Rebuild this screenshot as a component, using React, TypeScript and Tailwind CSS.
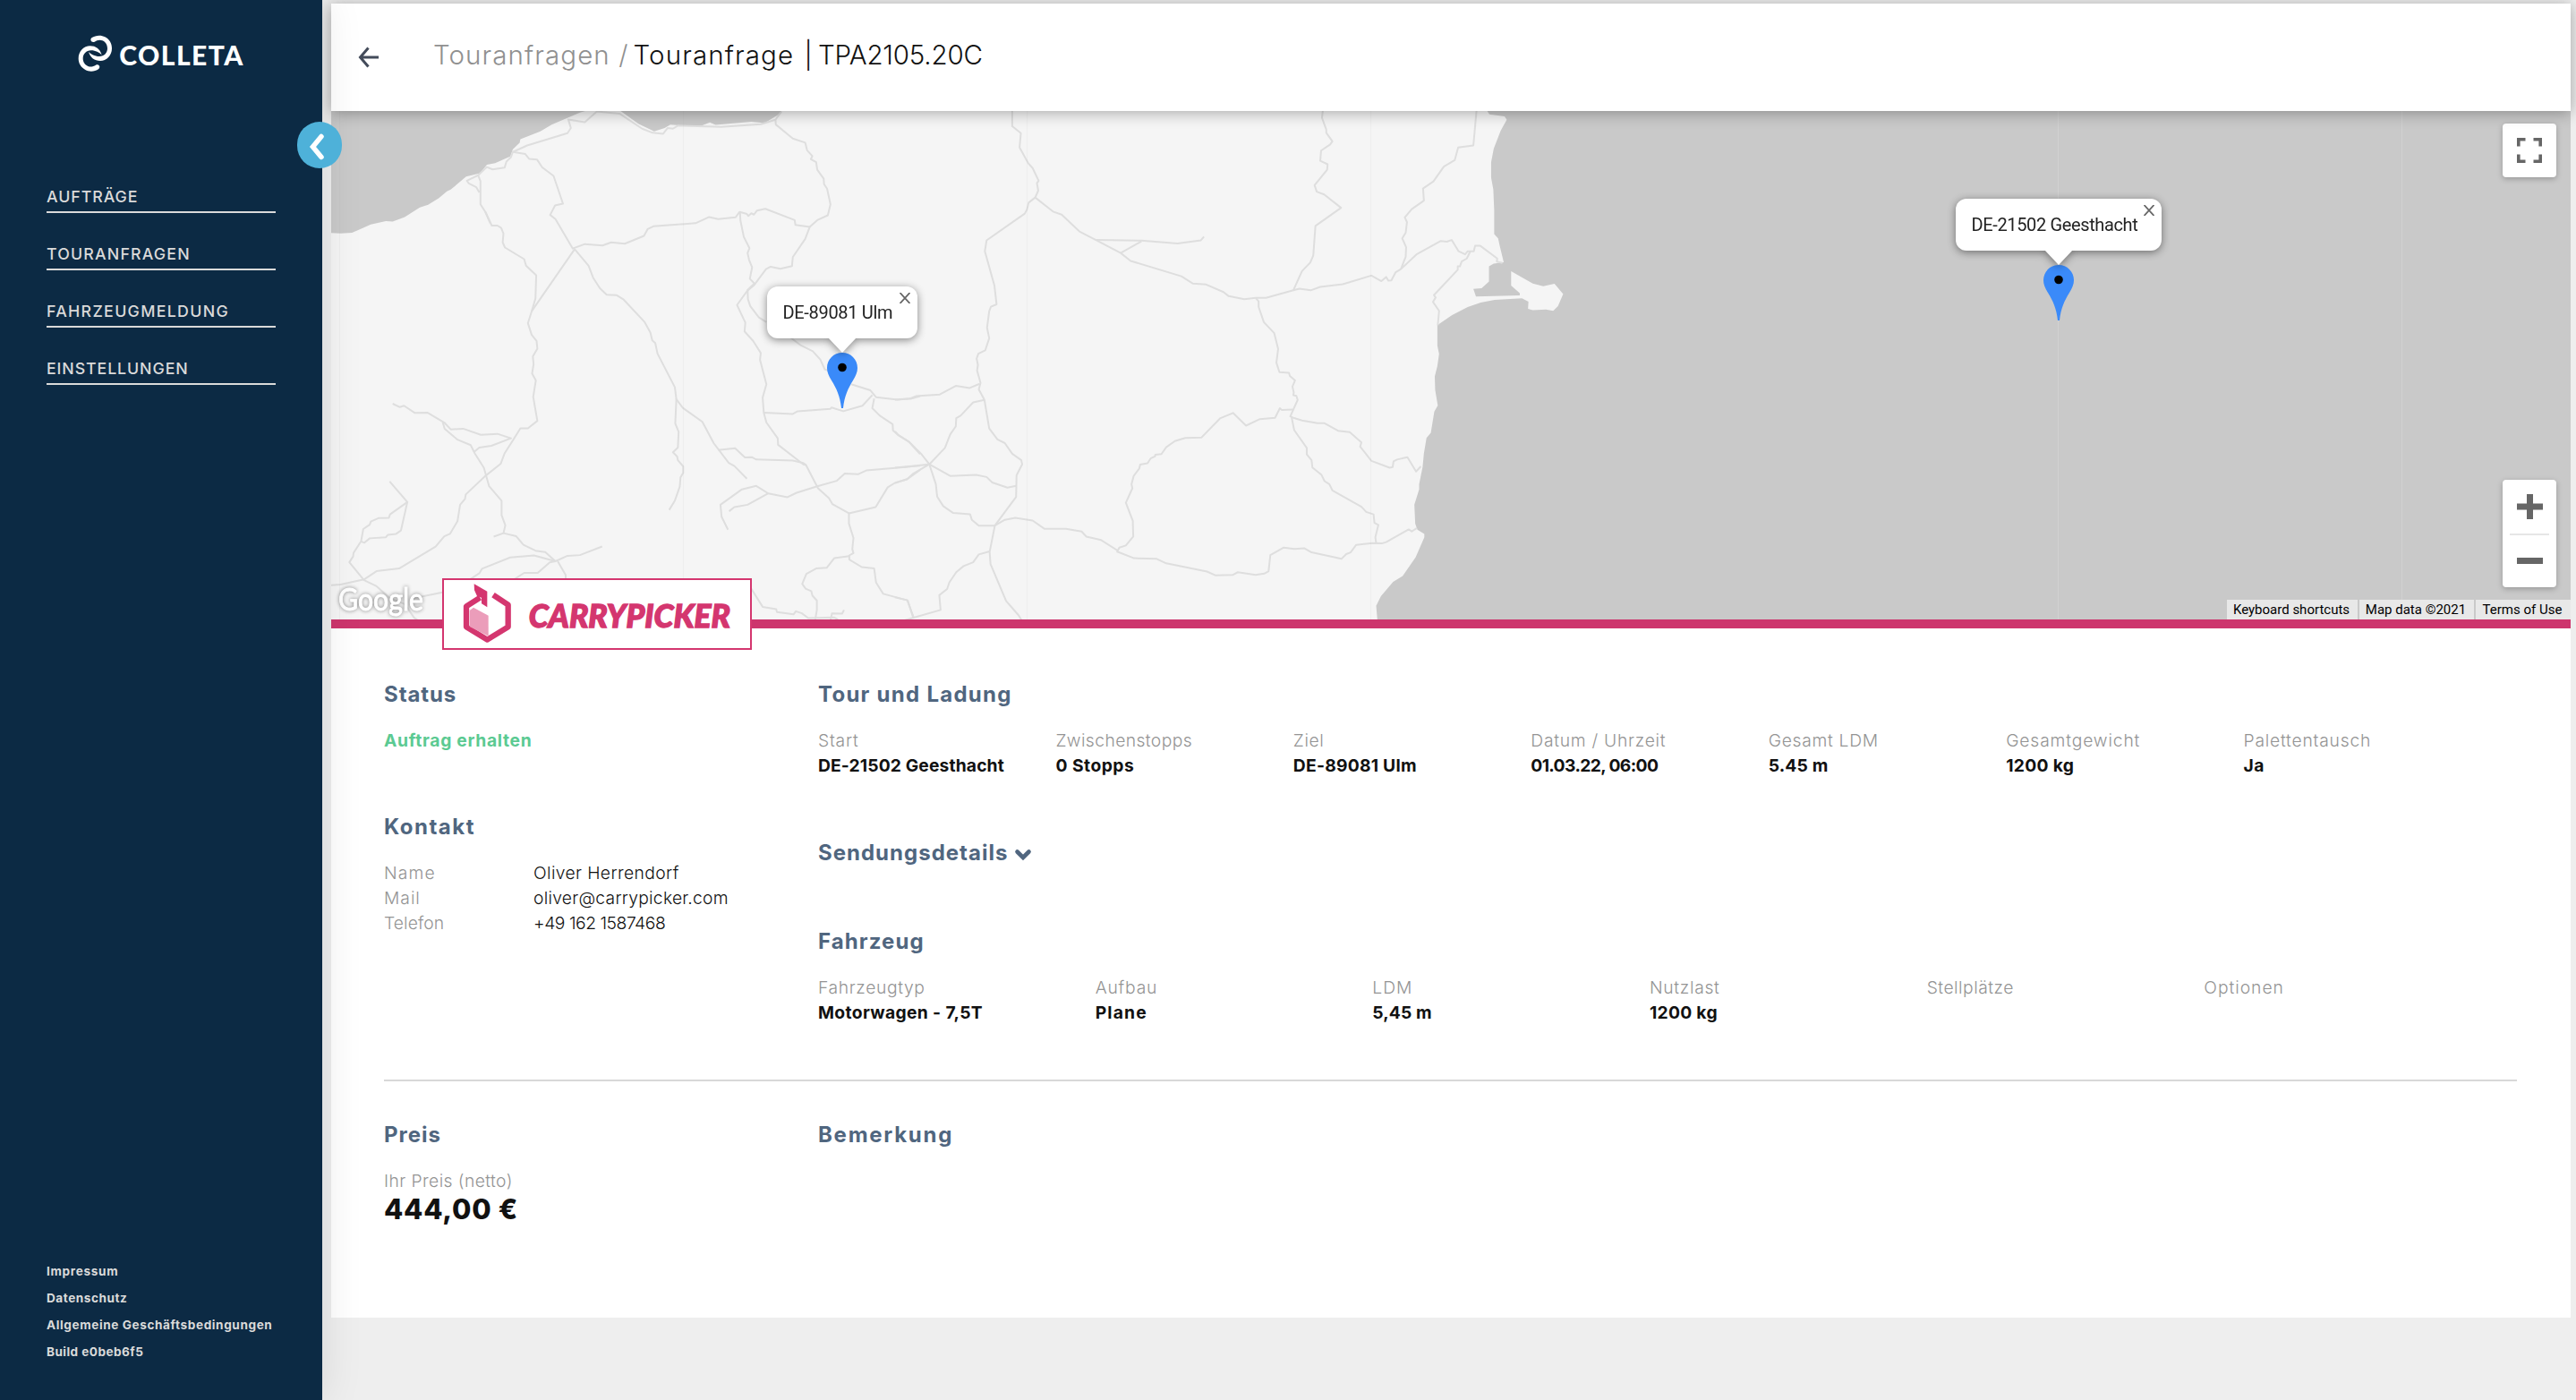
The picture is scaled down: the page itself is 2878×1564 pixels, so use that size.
import type { ReactNode } from "react";

const navItems = [
  { label: "AUFTRÄGE", tracking: "tracking-[0.052em]" },
  { label: "TOURANFRAGEN", tracking: "tracking-[0.065em]" },
  { label: "FAHRZEUGMELDUNG", tracking: "tracking-[0.073em]" },
  { label: "EINSTELLUNGEN", tracking: "tracking-[0.05em]" },
];

const footerItems = [
  { label: "Impressum", tracking: "tracking-[0.05em]" },
  { label: "Datenschutz", tracking: "tracking-[0.04em]" },
  { label: "Allgemeine Geschäftsbedingungen", tracking: "tracking-[0.044em]" },
  { label: "Build e0beb6f5", tracking: "tracking-[0.033em]" },
];

type FieldData = { label: string; value?: string; lt: string; vt?: string };

const tourFields: FieldData[] = [
  { label: "Start", value: "DE-21502 Geesthacht", lt: "tracking-[0.04em]", vt: "tracking-[0.006em]" },
  { label: "Zwischenstopps", value: "0 Stopps", lt: "tracking-[0.021em]", vt: "tracking-[0.025em]" },
  { label: "Ziel", value: "DE-89081 Ulm", lt: "tracking-[0.03em]", vt: "tracking-[0.012em]" },
  { label: "Datum / Uhrzeit", value: "01.03.22, 06:00", lt: "tracking-[0.038em]", vt: "tracking-[-0.032em]" },
  { label: "Gesamt LDM", value: "5.45 m", lt: "tracking-[0.036em]", vt: "tracking-[0.008em]" },
  { label: "Gesamtgewicht", value: "1200 kg", lt: "tracking-[0.044em]", vt: "tracking-[0.016em]" },
  { label: "Palettentausch", value: "Ja", lt: "tracking-[0.04em]", vt: "tracking-[0.02em]" },
];

const vehicleFields: FieldData[] = [
  { label: "Fahrzeugtyp", value: "Motorwagen - 7,5T", lt: "tracking-[0.033em]", vt: "tracking-[0.018em]" },
  { label: "Aufbau", value: "Plane", lt: "tracking-[0.042em]", vt: "tracking-[0.06em]" },
  { label: "LDM", value: "5,45 m", lt: "tracking-[0.05em]", vt: "tracking-[0.004em]" },
  { label: "Nutzlast", value: "1200 kg", lt: "tracking-[0.036em]", vt: "tracking-[0.014em]" },
  { label: "Stellplätze", lt: "tracking-[0.026em]" },
  { label: "Optionen", lt: "tracking-[0.05em]" },
];

function Heading({ children, tracking }: { children: ReactNode; tracking: string }) {
  return (
    <h2 className={`mb-6 h-7 text-[24px] leading-[29px] font-bold whitespace-nowrap text-[#50667f] ${tracking}`}>
      {children}
    </h2>
  );
}

function Field({ label, value, lt, vt }: FieldData) {
  return (
    <div className="h-14 text-[19.3px] leading-7 whitespace-nowrap">
      <div className={`font-light text-[#949494] ${lt}`}>{label}</div>
      {value && <div className={`font-bold text-[#111111] ${vt}`}>{value}</div>}
    </div>
  );
}

function ColletaLogo() {
  const link =
    "M98 67C112 57 131 57 143 64C158 72 166 86 166 102C166 126 148 144 127 144C108 144 94 134 88 114C97 122 108 129 124 129C140 129 151 117 151 102C151 90 144 80 134 76C124 72 115 76 108 80C98 84 91 74 98 67Z";
  return (
    <svg className="h-[42px] w-[186px]" viewBox="52 57 558 126" fill="#fff">
      <path d={link} />
      <path d={link} transform="rotate(180 110 119)" />
      <text
        x="191"
        y="159"
        fontFamily="Lato, sans-serif"
        fontWeight="900"
        fontSize="90"
        textLength="414"
        lengthAdjust="spacing"
      >
        COLLETA
      </text>
    </svg>
  );
}

function Sidebar() {
  return (
    <aside className="relative z-20 flex h-full w-[360px] shrink-0 flex-col bg-[#0c2a44] text-[#dadada] shadow-[0_0_44px_rgba(0,0,0,0.10)]">
      <div className="ml-[87px] mt-[39px] h-[42px]">
        <ColletaLogo />
      </div>
      <button className="absolute top-[136px] left-[332px] flex h-[52px] w-[50px] items-center justify-center rounded-[25px] bg-[#4eb1d9]">
        <svg className="mt-1 mr-[7px] h-8 w-5" viewBox="0 0 20 32" fill="none" stroke="#fff" strokeWidth="5.5" strokeLinecap="round">
          <path d="M15 4.500L5.500 16L15 27.500" />
        </svg>
      </button>
      <nav className="mt-[125px] ml-[52px] flex w-64 flex-col gap-8">
        {navItems.map((n) => (
          <a
            key={n.label}
            className={`border-b-2 border-[#dadada] pb-0.5 text-[17.8px] leading-7 font-medium ${n.tracking}`}
          >
            {n.label}
          </a>
        ))}
      </nav>
      <div className="mt-auto mb-[39px] ml-[52px] flex flex-col text-[13.6px] leading-[30px] font-bold whitespace-nowrap">
        {footerItems.map((f) => (
          <a key={f.label} className={f.tracking}>
            {f.label}
          </a>
        ))}
      </div>
    </aside>
  );
}

function Header() {
  return (
    <header className="relative z-10 flex h-[120px] items-center bg-white shadow-[0_2px_16px_rgba(0,0,0,0.32)]">
      <svg className="ml-[30px] h-6 w-6" viewBox="0 0 24 24" fill="none" stroke="#434b5a" strokeWidth="3">
        <path d="M23 12H3M11.500 1.500L2.500 12L11.500 22.500" />
      </svg>
      <h1 className="-mt-1.5 ml-[60px] flex text-[29.5px] leading-9 whitespace-pre">
        <span className="w-[223.500px] font-light tracking-[0.037em] text-[#909090]">Touranfragen /</span>
        <span className="w-[191px] font-[350] tracking-[0.038em] text-[#111]">Touranfrage</span>
        <span className="w-[15.500px] font-light text-[#111]">|</span>
        <span className="font-[350] tracking-[-0.006em] text-[#111]">TPA2105.20C</span>
      </h1>
    </header>
  );
}

/* Road and coast geometry, one coordinate grid per half of the mainland. */
const westRoads = [
  "M0 1395L30 1393L92 1378L125 1354L185 1346L282 1282L305 1252L320 1245L340 1208L347 1160L360 1143L362 1130L415 1075L455 1040L465 1010L490 967L507 937L527 937L552 915L541 845L548 797L538 777L542 750L540 727L552 704L550 682L537 664L527 630L537 595L651 414",
  "M537 595L547 558L549 490L522 462L517 443L466 409L460 394L462 368L456 352L446 345L431 345L414 305L401 283L401 215L395 198L365 214L370 222L390 233L398 248",
  "M414 305L427 338",
  "M395 198L418 174L433 181L465 176L470 158L482 145L487 130L520 136L530 150L551 152L565 175L595 200L620 281L599 286L586 314L600 326L646 412L678 399L725 403L748 394L784 398L835 375L845 355L860 347L972 338L1008 320L1032 326L1078 321L1089 305L1108 311L1112 317L1120 309L1127 313L1135 301L1157 296L1235 329L1237 343L1275 349",
  "M487 130L525 111L632 75L641 60L634 35L678 43L710 12L770 18L830 62L858 74L886 77L898 60L912 62L925 53L1040 57L1145 49L1184 36L1200 12",
  "M1184 36L1185 50L1230 91L1263 103L1268 125L1282 142L1278 151L1292 160L1295 182L1312 208L1313 224L1321 237L1330 283L1323 315L1295 329L1275 349L1263 384L1230 437L1228 463L1197 471L1171 465L1159 472L1128 518L1108 537L1082 577L1104 628L1102 654L1125 682L1145 717L1143 737L1160 808L1150 847L1153 891L1160 920L1190 966L1191 985L1258 1042L1265 1044L1297 1112L1326 1141L1335 1158L1379 1185L1379 1215L1391 1257L1388 1290L1391 1301L1380 1308L1380 1320L1413 1342L1446 1346L1451 1387L1470 1420L1534 1439L1551 1490",
  "M1090 308L1091 330L1100 378L1115 411L1110 425L1114 445L1122 467L1116 500L1128 514L1110 533L1111 560L1117 580L1140 613L1160 627",
  "M1225 673L1252 695L1283 712L1303 736L1315 765L1330 770",
  "M1385 808L1436 826L1451 846L1508 853L1545 850L1568 843",
  "M1153 891L1230 895L1243 887L1330 880L1333 876L1364 887L1415 871L1441 840",
  "M1446 850L1441 878L1461 900L1495 925L1496 943L1510 957L1537 975L1568 1012",
  "M651 414L688 462L700 497L718 528L736 547L762 548L780 560L837 627L852 657L857 680L865 688L871 719L917 817L921 852L938 877L990 918L1020 980L1060 1038L1075 1047L1108 1084",
  "M921 850L918 923L927 947L925 993L912 1007L923 1019L925 1030L939 1048L939 1067L932 1080L930 1107L917 1148L902 1175",
  "M1032 1000L1077 995L1103 1022L1121 1021L1133 1028L1230 1031L1258 1038L1265 1044",
  "M1568 1046L1425 1060L1403 1071L1368 1069L1347 1090L1295 1106L1240 1125L1216 1138L1165 1127L1133 1105L1095 1115L1038 1160L1041 1195L1058 1233",
  "M1061 1179L1075 1167L1110 1160L1165 1127",
  "M1379 1185L1450 1167L1482 1109L1500 1097L1534 1085L1568 1058",
  "M1380 1310L1340 1316L1320 1344L1292 1346L1266 1362L1255 1391L1264 1405L1279 1412L1282 1425L1294 1440L1294 1467L1289 1498",
  "M1117 1400L1150 1458L1186 1465L1188 1473L1232 1480L1238 1471L1254 1477L1271 1491L1340 1489L1350 1495",
  "M1330 1498L1334 1477L1361 1478L1366 1467",
  "M168 865L187 875L198 871L227 892L260 891L305 920L322 940L355 938L402 956L446 953L482 966L430 988L398 993L383 1007",
  "M301 920L306 938L340 970L375 986L386 1010L410 1052L424 1106L457 1148L457 1190L467 1220L462 1243L436 1253",
  "M462 1243L496 1252L515 1277L547 1294L573 1298L600 1325L632 1309L665 1307L724 1282",
  "M600 1325L543 1308L480 1314L405 1347L398 1360L370 1380L300 1430",
  "M600 1325L585 1328L553 1359L517 1359L480 1385",
  "M606 1325L627 1365L628 1400",
  "M160 1092L207 1152L161 1188L158 1198L130 1199L110 1209L107 1218L90 1231L84 1267L64 1301L63 1311L53 1328L92 1380L124 1397L160 1432L200 1450L225 1490L236 1498",
  "M207 1152L190 1235L177 1245L155 1248L150 1255L107 1258L93 1271L84 1267",
  "M215 1435L300 1416",
];

const eastRoads = [
  "M270 0V55L290 75L287 117L307 163L317 177L331 214L327 221L330 243L323 263L308 278L304 298L299 310L211 388L207 420L229 520L234 575L221 582L217 595L212 643L217 674L208 709L192 719L188 733L191 752L189 768L197 804L193 823L206 854L217 937L236 969L253 980L270 1011L291 1030L293 1042L280 1074L279 1137L230 1221L218 1298L220 1333L256 1441L285 1483L293 1500",
  "M323 263L364 304L384 313L425 362L463 387L520 425L543 448L660 493L686 514L717 517L757 539L769 551L805 560L831 556L855 556L918 534L932 529L958 534L980 524L1032 516L1098 491L1121 507L1132 495L1137 506L1144 505L1154 481L1166 472L1203 428L1258 390L1272 392L1283 387L1299 420L1314 429L1320 420L1334 420L1337 404L1349 404L1388 441L1387 450L1400 454",
  "M463 387L568 389L651 397L705 388L712 377",
  "M520 425L568 391",
  "M987 0L984 30L994 65L994 74L1008 99L1003 108L982 126L980 156L997 166L996 182L967 227L972 246L989 254L1028 293L969 346L964 432L957 453L938 478L918 534",
  "M1341 0L1333 111L1298 117L1290 154L1265 173L1241 216L1217 237L1219 272L1191 297L1175 321L1180 335L1177 366L1169 382L1178 408L1177 436L1166 472",
  "M1326 420L1318 441L1306 450L1302 464L1297 464L1297 474L1242 548L1246 555L1240 568L1254 594L1251 636",
  "M831 556L838 566L838 582L850 627L874 659L883 705L879 745L886 773L908 775L910 784L922 797L916 815L919 832L918 840L925 842L928 854L911 902L920 907L938 914L974 922L990 922L1021 944L1048 948L1075 978L1072 990L1098 1032L1140 1052L1147 1050L1149 1033L1157 1028L1181 1021L1201 1063L1212 1048",
  "M917 882L891 883L887 878L876 906L841 910L809 929L779 892L749 908L706 964L669 965L645 974L625 992L614 1012L600 1014L599 1019L589 1025L582 1039L565 1043L563 1054L550 1076L545 1100L547 1112L532 1154L548 1207L549 1253L532 1279L517 1285L512 1297L551 1316L603 1318L625 1331L719 1355L738 1366L778 1365L790 1357L831 1365L851 1361L861 1354L865 1307L896 1285L920 1289L943 1287L960 1299L1029 1318L1040 1304L1050 1299L1063 1277L1100 1272L1122 1273L1132 1269L1184 1232L1191 1238L1203 1228",
  "M914 904L920 942L949 994L949 1013L960 1030L962 1051L983 1073L990 1091L1001 1100L1008 1118L1075 1166L1086 1181L1103 1188L1105 1213L1114 1219L1107 1255L1109 1272",
  "M0 853L35 850L48 843L103 838L140 813L172 819L195 807",
  "M206 854L180 861L151 900L141 907L140 931L127 955L115 994L79 1042L60 1011L33 977L8 957L0 946",
  "M0 1052L79 1042L42 1069L28 1085L0 1096",
  "M79 1042L127 1076L187 1073L211 1079L224 1095L259 1110L279 1105",
  "M79 1042L94 1100L97 1136L111 1164L134 1184L173 1188L177 1204L193 1221L230 1221L253 1204L277 1198L317 1206L344 1230L394 1230L430 1238L441 1253L475 1263L512 1293",
  "M218 1296L193 1305L180 1328L158 1339L141 1357L125 1387L120 1406L102 1424L105 1467L20 1498",
  "M0 1430L29 1439L42 1490",
];

function MapCanvas() {
  return (
    <svg className="block h-[568px] w-[2502px]" viewBox="370 124 2502 568">
      <rect x="370" y="124" width="2502" height="568" fill="#f5f5f5" />
      <g transform="translate(368 120) scale(0.42092 0.38265)" fill="#c9c9c9">
        <path d="M0 0H712L665 15L590 50L560 70L507 93L505 103L487 122L480 143L440 163L418 167L400 192L363 202L322 240L312 245L290 265L262 284L240 292L200 320L168 333L150 332L110 342L60 366L30 368L0 366Z" />
        <path d="M760 0L820 48L862 70L890 60L905 50L930 52L990 52L1010 44L1025 51L1120 42L1155 46L1190 22L1210 0Z" />
      </g>
      <path
        transform="translate(1000 120) scale(0.48469 0.38265)"
        fill="#c9c9c9"
        d="M1360 0L1370 20L1405 26L1410 36L1396 68L1380 120L1374 160V205L1379 240L1381 300V370L1390 382L1394 405L1403 452L1380 456L1369 464V508L1352 528L1333 530L1339 552L1440 549V542L1420 520V478L1470 514L1494 522L1520 515L1540 545L1528 580L1517 594L1500 590L1470 592L1459 588L1460 567L1445 557L1382 562L1350 570L1320 583L1284 606L1250 636V695L1254 720L1250 755L1244 785L1245 825L1251 870L1243 888L1235 950L1225 965L1219 1010L1216 1050L1208 1100V1115L1197 1160L1199 1215L1204 1233L1220 1245V1255L1200 1313L1170 1368L1148 1385L1120 1427L1109 1455L1112 1500H3900V0Z"
      />
      <g fill="none" stroke="#dedede" strokeWidth="2" strokeLinejoin="round">
        <g transform="translate(368 120) scale(0.42092 0.38265)">
          {westRoads.map((d) => (
            <path key={d} d={d} vectorEffect="non-scaling-stroke" />
          ))}
        </g>
        <g transform="translate(1000 120) scale(0.48469 0.38265)">
          {eastRoads.map((d) => (
            <path key={d} d={d} vectorEffect="non-scaling-stroke" />
          ))}
        </g>
      </g>
      <path d="M379.500 124V692M763.500 124V692M1147.500 124V692M1531.500 124V692" stroke="#808080" strokeOpacity="0.06" />
      <path d="M2299.500 124V692M2683.500 124V692" stroke="#fff" strokeOpacity="0.15" />
      <text
        x="378"
        y="681.500"
        fontFamily="Lato, sans-serif"
        fontSize="34"
        fill="#fff"
        stroke="#fff"
        strokeWidth="0.9"
        textLength="95"
        lengthAdjust="spacingAndGlyphs"
        className="drop-shadow-[0_0_2px_rgba(0,0,0,0.45)]"
      >
        Google
      </text>
    </svg>
  );
}

function Marker({ label, className, bubble }: { label: string; className: string; bubble: string }) {
  return (
    <div className={`absolute flex flex-col items-center ${className}`}>
      <div className="flex flex-col items-center drop-shadow-[0_2px_5px_rgba(0,0,0,0.45)]">
        <div className={`relative h-[58px] rounded-xl bg-white pt-[15px] pl-[17.5px] font-[Roboto] text-[20px] leading-7 whitespace-nowrap text-[#222] ${bubble}`}>
          {label}
          <svg className="absolute top-[7px] right-[8px] h-3 w-3" viewBox="0 0 12 12" stroke="#666" strokeWidth="1.8">
            <path d="M0.500 0L11.500 12M11.500 0L0.500 12" />
          </svg>
        </div>
        <svg className="-mt-px h-[17px] w-8" viewBox="0 0 32 17" fill="#fff">
          <path d="M0 0H32L16 17Z" />
        </svg>
      </div>
      <svg className="h-[62px] w-[34px]" viewBox="0 0 34 62">
        <path d="M17 0C7.500 0 0 7.500 0 17C0 22 1.800 25.500 5 31C10.500 40 14.500 48 16 62H18C19.500 48 23.500 40 29 31C32.200 25.500 34 22 34 17C34 7.500 26.500 0 17 0Z" fill="#3a8af9" />
        <circle cx="17" cy="16.500" r="4.800" fill="#000" />
      </svg>
    </div>
  );
}

function MapView() {
  return (
    <section className="relative h-[568px] w-full overflow-hidden">
      <MapCanvas />
      <Marker label="DE-89081 Ulm" className="top-[196px] left-[487px]" bubble="w-[168px] tracking-[-0.016em]" />
      <Marker label="DE-21502 Geesthacht" className="top-[98px] left-[1815px]" bubble="w-[230px] tracking-[-0.018em]" />
      <button className="absolute top-[14px] right-4 flex h-[60px] w-[60px] items-center justify-center rounded bg-white shadow-[0_2px_6px_rgba(0,0,0,0.25)]">
        <svg className="h-7 w-7" viewBox="0 0 28 28" fill="none" stroke="#666" strokeWidth="3.6">
          <path d="M1.800 9.500V1.800H9.500M18.500 1.800H26.200V9.500M26.200 18.500V26.200H18.500M9.500 26.200H1.800V18.500" />
        </svg>
      </button>
      <div className="absolute top-[412px] right-4 flex h-[120px] w-[60px] flex-col items-center rounded bg-white shadow-[0_2px_6px_rgba(0,0,0,0.25)]">
        <div className="flex h-[60px] items-center justify-center">
          <svg className="h-7 w-[29px]" viewBox="0 0 29 28" fill="#666">
            <path d="M11 0H18V10.500H29V17.500H18V28H11V17.500H0V10.500H11Z" />
          </svg>
        </div>
        <div className="h-0.5 w-11 bg-[#e6e6e6]" />
        <div className="flex h-[57px] items-center justify-center">
          <div className="h-[7px] w-[29px] bg-[#666]" />
        </div>
      </div>
      <div className="absolute right-0 bottom-0 flex h-[22px] gap-0.5 font-[Roboto] text-[15px] leading-[22px] whitespace-nowrap text-black">
        <span className="w-[146px] bg-[#e8e8e8] pr-0.5 text-center">Keyboard shortcuts</span>
        <span className="w-[128px] bg-[#e8e8e8] pr-0.5 text-center">Map data ©2021</span>
        <span className="w-[106px] bg-[#e8e8e8] pr-0.5 text-center">Terms of Use</span>
      </div>
    </section>
  );
}

function CarrierBadge() {
  return (
    <div className="absolute top-[-56px] left-[124px] z-10 h-20 w-[346px] border-2 border-[#d4366f] bg-white">
      <svg className="h-[76px] w-[342px]" viewBox="384 84 1026 228">
        <path d="M549 134L599 167V241L529 284L459 241V172L505 143" fill="none" stroke="#d4366f" strokeWidth="19" strokeLinejoin="round" />
        <path d="M485 97L529 122V175L510 163V143L495 138L486 118Z" fill="#d4366f" />
        <path d="M470 186L483 176L533 203V272L470 240Z" fill="#eb9dba" />
        <text
          x="668"
          y="242"
          fontFamily="Lato, sans-serif"
          fontWeight="900"
          fontStyle="italic"
          fontSize="106"
          fill="#d4366f"
          stroke="#d4366f"
          strokeWidth="4"
          textLength="676"
          lengthAdjust="spacingAndGlyphs"
        >
          CARRYPICKER
        </text>
      </svg>
    </div>
  );
}

const contacts = [
  { label: "Name", value: "Oliver Herrendorf", lt: "tracking-[0.06em]", vt: "tracking-[0.02em]" },
  { label: "Mail", value: "oliver@carrypicker.com", lt: "tracking-[0.05em]", vt: "tracking-[0.013em]" },
  { label: "Telefon", value: "+49 162 1587468", lt: "tracking-[0.004em]", vt: "tracking-[-0.024em]" },
];

function Details() {
  return (
    <section className="relative h-[780px] border-t-[10px] border-[#cd356d] bg-white">
      <CarrierBadge />
      <div className="flex h-[504px] pt-[59px] pl-[59px]">
        <div className="w-[485px]">
          <Heading tracking="tracking-[0.038em]">Status</Heading>
          <div className="mb-[68px] text-[19.3px] leading-7 font-bold tracking-[0.035em] text-[#5bca92]">Auftrag erhalten</div>
          <Heading tracking="tracking-[0.062em]">Kontakt</Heading>
          <dl className="grid grid-cols-[167px_1fr] text-[19.3px] leading-7 font-light whitespace-nowrap">
            {contacts.map((c) => (
              <div key={c.label} className="contents">
                <dt className={`text-[#949494] ${c.lt}`}>{c.label}</dt>
                <dd className={`text-[#111111] ${c.vt}`}>{c.value}</dd>
              </div>
            ))}
          </dl>
        </div>
        <div className="w-[1858px]">
          <Heading tracking="tracking-[0.053em]">Tour und Ladung</Heading>
          <div className="mb-[69px] grid grid-cols-7">
            {tourFields.map((f) => (
              <Field key={f.label} {...f} />
            ))}
          </div>
          <h2 className="mb-[71px] flex h-7 items-center text-[24px] leading-[29px] font-bold tracking-[0.042em] text-[#50667f]">
            Sendungsdetails
            <svg className="mt-1.5 ml-[7px] h-[14px] w-5" viewBox="0 0 20 14" fill="none" stroke="#50667f" strokeWidth="4.600" strokeLinecap="round">
              <path d="M3.500 3.500L10 10L16.500 3.500" />
            </svg>
          </h2>
          <Heading tracking="tracking-[0.046em]">Fahrzeug</Heading>
          <div className="grid grid-cols-6">
            {vehicleFields.map((f) => (
              <Field key={f.label} {...f} />
            ))}
          </div>
        </div>
      </div>
      <div className="mr-[60px] ml-[59px] h-0.5 bg-[#d8d8d8]" />
      <div className="flex pt-[45px] pl-[59px]">
        <div className="w-[485px]">
          <Heading tracking="tracking-[0.042em]">Preis</Heading>
          <div className="text-[19.3px] leading-7 font-light tracking-[0.022em] text-[#949494]">Ihr Preis (netto)</div>
          <div className="text-[31px] leading-9 font-extrabold tracking-[0.024em] text-[#111111]">444,00 €</div>
        </div>
        <Heading tracking="tracking-[0.072em]">Bemerkung</Heading>
      </div>
    </section>
  );
}

export default function App() {
  return (
    <div className="flex h-[1564px] w-[2878px] overflow-hidden bg-[#eeeeee] font-[Inter,sans-serif]">
      <Sidebar />
      <main className="mt-1 ml-2.5 flex w-[2502px] flex-col">
        <Header />
        <MapView />
        <Details />
      </main>
    </div>
  );
}
